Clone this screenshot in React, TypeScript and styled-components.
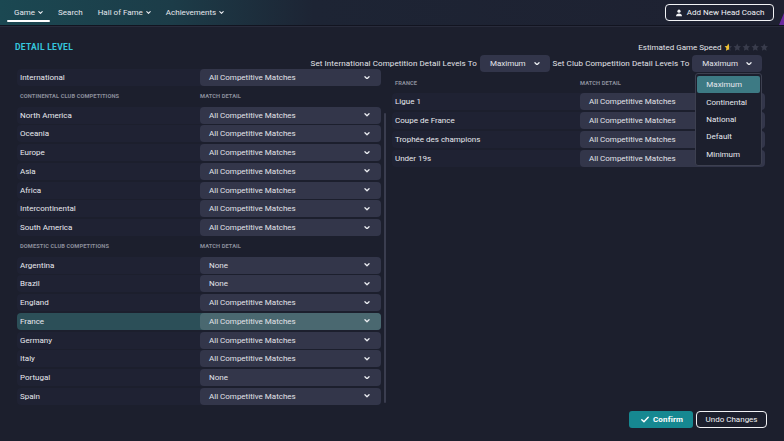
import React from "react";
import styled, { createGlobalStyle, css } from "styled-components";

const GlobalStyle = createGlobalStyle`
  html, body {
    margin: 0;
    padding: 0;
    background: #1c1f2d;
  }
  body {
    font-family: Roboto, "Noto Sans", "Liberation Sans", sans-serif;
    color: #e4e5ea;
  }
  * {
    box-sizing: border-box;
  }
`;

const ACM = "All Competitive Matches";

type Row = { label: string; value: string; active?: boolean };

const international: Row[] = [{ label: "International", value: ACM }];

const continental: Row[] = [
  "North America",
  "Oceania",
  "Europe",
  "Asia",
  "Africa",
  "Intercontinental",
  "South America",
].map((label) => ({ label, value: ACM }));

const domestic: Row[] = [
  { label: "Argentina", value: "None" },
  { label: "Brazil", value: "None" },
  { label: "England", value: ACM },
  { label: "France", value: ACM, active: true },
  { label: "Germany", value: ACM },
  { label: "Italy", value: ACM },
  { label: "Portugal", value: "None" },
  { label: "Spain", value: ACM },
];

const france: Row[] = [
  { label: "Ligue 1", value: ACM },
  { label: "Coupe de France", value: ACM },
  { label: "Trophée des champions", value: ACM },
  { label: "Under 19s", value: ACM },
];

const levels = ["Maximum", "Continental", "National", "Default", "Minimum"];

/* ---------- icons ---------- */

const Chevron: React.FC<{ size?: number }> = ({ size = 6 }) => (
  <svg width={size} height={size * 0.65} viewBox="0 0 6 4" fill="none">
    <path
      d="M0.9 0.8 L3 2.9 L5.1 0.8"
      stroke="#eceef2"
      strokeWidth="1.3"
      strokeLinecap="round"
      strokeLinejoin="round"
    />
  </svg>
);

const UserIcon = () => (
  <svg width="8" height="8" viewBox="0 0 24 24" fill="#f2f3f6">
    <circle cx="12" cy="6.5" r="4.8" />
    <path d="M3 22c0-5 4-8.2 9-8.2s9 3.2 9 8.2z" />
  </svg>
);

const CheckIcon = () => (
  <svg width="8" height="7" viewBox="0 0 10 8" fill="none">
    <path
      d="M1 4.2 L3.7 6.8 L9 1.2"
      stroke="#ffffff"
      strokeWidth="1.8"
      strokeLinecap="round"
      strokeLinejoin="round"
    />
  </svg>
);

const STAR =
  "M12 1.5l3.3 6.7 7.2 1.05-5.25 5.1 1.25 7.2L12 18.1l-6.5 3.45 1.25-7.2L1.5 9.25l7.2-1.05z";

const Star: React.FC<{ half?: boolean }> = ({ half }) => (
  <svg width="8.5" height="8.5" viewBox="0 0 24 24">
    {half && (
      <defs>
        <linearGradient id="halfStar" x1="0" x2="1" y1="0" y2="0">
          <stop offset="55%" stopColor="#f0c233" />
          <stop offset="55%" stopColor="#393c4c" />
        </linearGradient>
      </defs>
    )}
    <path d={STAR} fill={half ? "url(#halfStar)" : "#393c4c"} />
  </svg>
);

/* ---------- top bar ---------- */

const TopBarSC = styled.header`
  position: relative;
  flex: none;
  height: 26px;
  display: flex;
  align-items: center;
  justify-content: space-between;
  padding: 0 10px 0 7px;
  background: linear-gradient(
    90deg,
    #1b4852 0%,
    #1c3c48 22%,
    #1d2434 40%,
    #1e2131 100%
  );
  border-bottom: 1px solid #121420;
  box-shadow: 0 1px 0 #282b3b;

  &::after {
    content: "";
    position: absolute;
    right: 0;
    top: 13px;
    width: 5px;
    height: 12px;
    background: #6b2aa0;
    clip-path: polygon(100% 0, 100% 100%, 0 100%);
  }
`;

const NavSC = styled.nav`
  display: flex;
  height: 100%;
  gap: 1px;
`;

const NavItemSC = styled.div<{ $active?: boolean }>`
  position: relative;
  display: flex;
  align-items: center;
  gap: 3px;
  padding: 0 7px;
  height: 100%;
  font-size: 8px;
  color: #e6e8ee;

  ${({ $active }) =>
    $active &&
    css`
      &::after {
        content: "";
        position: absolute;
        left: 0;
        right: 0;
        bottom: 3px;
        height: 2px;
        border-radius: 1px;
        background: #ffffff;
      }
    `}
`;

const OutlineButtonSC = styled.button`
  display: flex;
  align-items: center;
  gap: 4px;
  height: 17px;
  padding: 0 8.5px;
  border: 1.5px solid #f2f3f6;
  border-radius: 4px;
  background: transparent;
  color: #f2f3f6;
  font-family: inherit;
  font-size: 8px;
  cursor: pointer;
`;

/* ---------- main ---------- */

const PageSC = styled.div`
  width: 784px;
  height: 441px;
  display: flex;
  flex-direction: column;
  overflow: hidden;
  background: #1c1f2d;
`;

const MainSC = styled.main`
  flex: 1;
  display: flex;
  flex-direction: column;
  padding: 0 16px 0 15px;
`;

const TitleRowSC = styled.div`
  display: flex;
  align-items: center;
  justify-content: space-between;
  height: 10px;
  margin-top: 16px;
`;

const TitleSC = styled.h1`
  margin: 0;
  font-size: 8.5px;
  font-weight: 700;
  letter-spacing: 0.3px;
  color: #35c7dd;
`;

const SpeedSC = styled.div`
  display: flex;
  align-items: center;
  gap: 2px;
  font-size: 8px;
  color: #e4e5ea;
`;

const StarsSC = styled.div`
  display: flex;
  gap: 0.5px;
`;

const ControlsRowSC = styled.div`
  display: flex;
  align-items: center;
  justify-content: flex-end;
  gap: 3px;
  height: 17px;
  margin-top: 3px;
  padding-right: 6px;
  font-size: 8px;
`;

const ControlLabelSC = styled.span`
  letter-spacing: 0.1px;
`;

const ControlSelectSC = styled.div`
  position: relative;
  display: flex;
  align-items: center;
  gap: 8px;
  height: 17px;
  padding: 0 10px;
  border-radius: 4px;
  background: #32354a;
  color: #e4e5ea;
`;

const MenuSC = styled.div`
  position: absolute;
  z-index: 5;
  top: calc(100% + 1px);
  left: 3px;
  right: 0;
  padding: 2px 1px;
  background: #1c1f2d;
  border: 1px solid #3d4050;
  border-radius: 3px;
`;

const MenuItemSC = styled.div<{ $active?: boolean }>`
  height: 17.4px;
  display: flex;
  align-items: center;
  padding-left: 9px;
  font-size: 8px;
  color: #e6e8ee;
  border-radius: 2px;
  background: ${({ $active }) => ($active ? "#3d7a84" : "transparent")};
`;

const ColumnsSC = styled.div`
  display: flex;
  align-items: flex-start;
  margin: -3px 0 0 2px;
`;

const PanelSC = styled.div<{ $width: number; $offset?: number }>`
  flex: none;
  width: ${({ $width }) => $width}px;
  display: flex;
  flex-direction: column;
  gap: 1.75px;
  padding-top: ${({ $offset = 0 }) => $offset}px;
`;

const ScrollTrackSC = styled.div`
  flex: none;
  width: 2px;
  height: 290px;
  margin: 44px 6.5px 0 2.5px;
  border-radius: 1px;
  background: #3a3d4f;
`;

const RowSC = styled.div<{ $labelWidth: number; $active?: boolean }>`
  display: grid;
  grid-template-columns: ${({ $labelWidth }) => $labelWidth}px 1fr;
  height: 17px;
  border-radius: 4px;
  background: ${({ $active }) => ($active ? "#2c4f58" : "#1f2233")};
`;

const HeaderRowSC = styled.div<{ $labelWidth: number }>`
  display: grid;
  grid-template-columns: ${({ $labelWidth }) => $labelWidth}px 1fr;
  align-items: center;
  height: 17px;
  font-size: 5.7px;
  font-weight: 700;
  text-transform: uppercase;
  letter-spacing: 0.1px;
  color: #8b8e9b;

  & > span:first-child {
    padding-left: 3px;
  }
`;

const LabelSC = styled.div`
  display: flex;
  align-items: center;
  padding-left: 3px;
  font-size: 8px;
  color: #e8e9ee;
`;

const SelectBoxSC = styled.div<{ $active?: boolean }>`
  display: flex;
  align-items: center;
  justify-content: space-between;
  padding: 0 11px 0 9px;
  border-radius: 4px;
  font-size: 8px;
  color: #e2e3e9;
  background: ${({ $active }) => ($active ? "#4a6870" : "#33364a")};
`;

const FooterSC = styled.footer`
  display: flex;
  justify-content: flex-end;
  gap: 3px;
  margin-top: auto;
  padding: 0 1px 13px 0;
`;

const PrimaryButtonSC = styled.button`
  display: flex;
  align-items: center;
  gap: 4px;
  height: 17px;
  padding: 0 10px 0 12px;
  border: none;
  border-radius: 3px;
  background: #168891;
  color: #ffffff;
  font-family: inherit;
  font-size: 8px;
  font-weight: 700;
  letter-spacing: 0.15px;
  cursor: pointer;
`;

/* ---------- pieces ---------- */

const DetailRow: React.FC<{ row: Row; labelWidth: number }> = ({
  row,
  labelWidth,
}) => (
  <RowSC $labelWidth={labelWidth} $active={row.active}>
    <LabelSC>{row.label}</LabelSC>
    <SelectBoxSC $active={row.active}>
      <span>{row.value}</span>
      <Chevron />
    </SelectBoxSC>
  </RowSC>
);

const SectionHeader: React.FC<{ title: string; labelWidth: number }> = ({
  title,
  labelWidth,
}) => (
  <HeaderRowSC $labelWidth={labelWidth}>
    <span>{title}</span>
    <span>Match Detail</span>
  </HeaderRowSC>
);

const App: React.FC = () => {
  const left = 183;
  const right = 188;

  return (
    <PageSC>
      <GlobalStyle />
      <TopBarSC>
        <NavSC>
          <NavItemSC $active>
            Game <Chevron size={5} />
          </NavItemSC>
          <NavItemSC>Search</NavItemSC>
          <NavItemSC>
            Hall of Fame <Chevron size={5} />
          </NavItemSC>
          <NavItemSC>
            Achievements <Chevron size={5} />
          </NavItemSC>
        </NavSC>
        <OutlineButtonSC>
          <UserIcon />
          Add New Head Coach
        </OutlineButtonSC>
      </TopBarSC>

      <MainSC>
        <TitleRowSC>
          <TitleSC>DETAIL LEVEL</TitleSC>
          <SpeedSC>
            Estimated Game Speed
            <StarsSC>
              <Star half />
              <Star />
              <Star />
              <Star />
              <Star />
            </StarsSC>
          </SpeedSC>
        </TitleRowSC>

        <ControlsRowSC>
          <ControlLabelSC>
            Set International Competition Detail Levels To
          </ControlLabelSC>
          <ControlSelectSC>
            Maximum <Chevron />
          </ControlSelectSC>
          <ControlLabelSC>Set Club Competition Detail Levels To</ControlLabelSC>
          <ControlSelectSC>
            Maximum <Chevron />
            <MenuSC>
              {levels.map((level, i) => (
                <MenuItemSC key={level} $active={i === 0}>
                  {level}
                </MenuItemSC>
              ))}
            </MenuSC>
          </ControlSelectSC>
        </ControlsRowSC>

        <ColumnsSC>
          <PanelSC $width={364}>
            {international.map((row) => (
              <DetailRow key={row.label} row={row} labelWidth={left} />
            ))}
            <SectionHeader
              title="Continental Club Competitions"
              labelWidth={left}
            />
            {continental.map((row) => (
              <DetailRow key={row.label} row={row} labelWidth={left} />
            ))}
            <SectionHeader
              title="Domestic Club Competitions"
              labelWidth={left}
            />
            {domestic.map((row) => (
              <DetailRow key={row.label} row={row} labelWidth={left} />
            ))}
          </PanelSC>
          <ScrollTrackSC />
          <PanelSC $width={373} $offset={5.5}>
            <SectionHeader title="France" labelWidth={right} />
            {france.map((row) => (
              <DetailRow key={row.label} row={row} labelWidth={right} />
            ))}
          </PanelSC>
        </ColumnsSC>

        <FooterSC>
          <PrimaryButtonSC>
            <CheckIcon />
            Confirm
          </PrimaryButtonSC>
          <OutlineButtonSC>Undo Changes</OutlineButtonSC>
        </FooterSC>
      </MainSC>
    </PageSC>
  );
};

export default App;
